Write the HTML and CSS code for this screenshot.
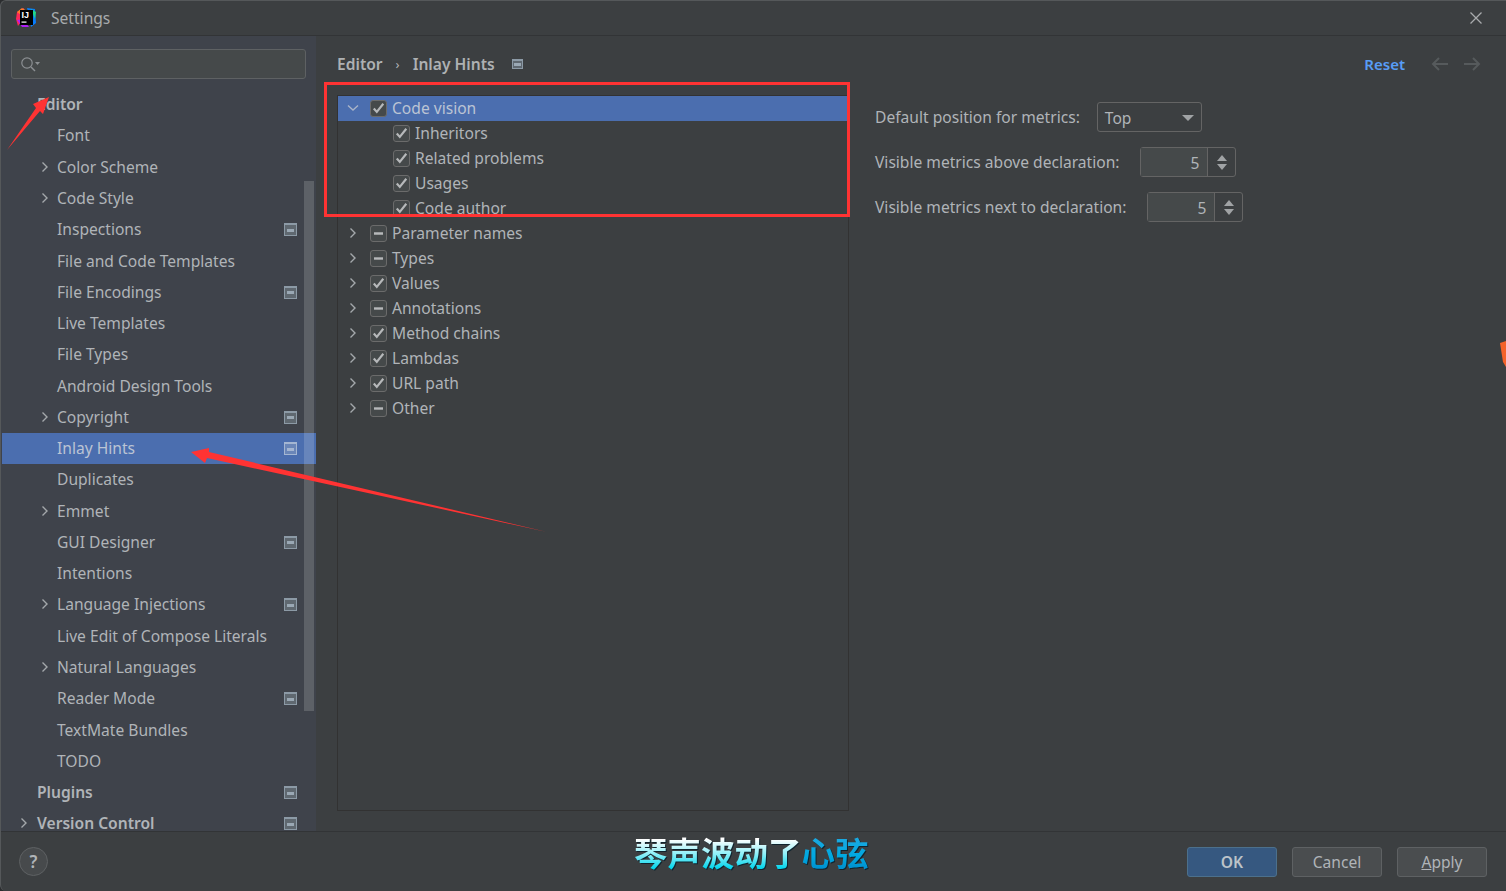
FILE: index.html
```html
<!DOCTYPE html>
<html lang="en">
<head>
    <meta charset="UTF-8">
    <title>Settings</title>
    <link rel="stylesheet" href="styles.css">
</head>
<body>
    <svg class="defs" width="0" height="0">
        <symbol id="chev-right" viewBox="0 0 10 12"><path d="M2.500 1.500L7 6l-4.500 4.500" fill="none" stroke="#a4a8ab" stroke-width="1.400"/></symbol>
        <symbol id="chev-down" viewBox="0 0 12 10"><path d="M1 2.500L6 7l5-4.500" fill="none" stroke="#a9b4c8" stroke-width="1.400"/></symbol>
        <symbol id="check" viewBox="0 0 15 15"><path d="M2.800 7.500l3 3.400L12.300 2.800" fill="none" stroke="#b6b8ba" stroke-width="2.200"/></symbol>
        <symbol id="dash" viewBox="0 0 15 15"><path d="M3 7.500h9" fill="none" stroke="#b6b8ba" stroke-width="2.400"/></symbol>
    </svg>

    <div class="window">
        <div class="titlebar">
            <svg class="logo" width="22" height="22" viewBox="0 0 22 22">
                <polygon points="2,5 9,1 8,12 3,19 1,12" fill="#fe2857"/>
                <polygon points="2,5 7,1 12,4 6,8" fill="#fe7a2b"/>
                <polygon points="12,1 20,2 21,16 16,20 14,8" fill="#087cfa"/>
                <polygon points="16,2 21,5 20,12" fill="#21d789"/>
                <polygon points="2,13 7,20 14,20 8,12" fill="#af1df5"/>
                <rect x="5" y="3" width="13" height="15" fill="#000"/>
                <text x="6.500" y="11" class="logo-text">IJ</text>
                <rect x="6.500" y="14.500" width="5" height="1.200" fill="#fff"/>
            </svg>
            <span class="title">Settings</span>
            <svg class="close" width="14" height="14" viewBox="0 0 14 14"><path d="M1.500 1.500l11 11M12.500 1.500l-11 11" stroke="#a9abad" stroke-width="1.300"/></svg>
        </div>

        <div class="content">
            <div class="sidebar">
                <div class="search">
                    <svg width="22" height="16" viewBox="0 0 22 16"><circle cx="7" cy="7" r="5.200" fill="none" stroke="#8c9093" stroke-width="1.200"/><path d="M11 11l4 4" stroke="#8c9093" stroke-width="1.400"/><path d="M15 6h5l-2.500 3z" fill="#8c9093"/></svg>
                </div>
                <ul class="tree">
                    <li class="top">Editor</li>
                    <li>Font</li>
                    <li class="arrow"><svg class="chev"><use href="#chev-right"/></svg>Color Scheme</li>
                    <li class="arrow"><svg class="chev"><use href="#chev-right"/></svg>Code Style</li>
                    <li class="scoped">Inspections</li>
                    <li>File and Code Templates</li>
                    <li class="scoped">File Encodings</li>
                    <li>Live Templates</li>
                    <li>File Types</li>
                    <li>Android Design Tools</li>
                    <li class="arrow scoped"><svg class="chev"><use href="#chev-right"/></svg>Copyright</li>
                    <li class="scoped selected">Inlay Hints</li>
                    <li>Duplicates</li>
                    <li class="arrow"><svg class="chev"><use href="#chev-right"/></svg>Emmet</li>
                    <li class="scoped">GUI Designer</li>
                    <li>Intentions</li>
                    <li class="arrow scoped"><svg class="chev"><use href="#chev-right"/></svg>Language Injections</li>
                    <li>Live Edit of Compose Literals</li>
                    <li class="arrow"><svg class="chev"><use href="#chev-right"/></svg>Natural Languages</li>
                    <li class="scoped">Reader Mode</li>
                    <li>TextMate Bundles</li>
                    <li>TODO</li>
                    <li class="top scoped">Plugins</li>
                    <li class="top arrow scoped"><svg class="chev"><use href="#chev-right"/></svg>Version Control</li>
                </ul>
                <div class="scrollbar"></div>
            </div>

            <div class="main">
                <div class="breadcrumbs">
                    <span class="crumb">Editor</span>
                    <span class="crumb-sep">›</span>
                    <span class="crumb">Inlay Hints</span>
                    <span class="scope-icon"></span>
                    <a class="reset">Reset</a>
                    <svg class="nav-arrow" width="18" height="14" viewBox="0 0 18 14"><path d="M17 7H2M8 1L2 7l6 6" fill="none" stroke="#565a5c" stroke-width="2"/></svg>
                    <svg class="nav-arrow" width="18" height="14" viewBox="0 0 18 14"><path d="M1 7h15M10 1l6 6-6 6" fill="none" stroke="#565a5c" stroke-width="2"/></svg>
                </div>

                <div class="panels">
                    <div class="hints">
                        <div class="hint active"><svg class="hint-chev"><use href="#chev-down"/></svg><span class="box"><svg><use href="#check"/></svg></span>Code vision</div>
                        <div class="hint child"><span class="box"><svg><use href="#check"/></svg></span>Inheritors</div>
                        <div class="hint child"><span class="box"><svg><use href="#check"/></svg></span>Related problems</div>
                        <div class="hint child"><span class="box"><svg><use href="#check"/></svg></span>Usages</div>
                        <div class="hint child"><span class="box"><svg><use href="#check"/></svg></span>Code author</div>
                        <div class="hint"><svg class="hint-chev"><use href="#chev-right"/></svg><span class="box"><svg><use href="#dash"/></svg></span>Parameter names</div>
                        <div class="hint"><svg class="hint-chev"><use href="#chev-right"/></svg><span class="box"><svg><use href="#dash"/></svg></span>Types</div>
                        <div class="hint"><svg class="hint-chev"><use href="#chev-right"/></svg><span class="box"><svg><use href="#check"/></svg></span>Values</div>
                        <div class="hint"><svg class="hint-chev"><use href="#chev-right"/></svg><span class="box"><svg><use href="#dash"/></svg></span>Annotations</div>
                        <div class="hint"><svg class="hint-chev"><use href="#chev-right"/></svg><span class="box"><svg><use href="#check"/></svg></span>Method chains</div>
                        <div class="hint"><svg class="hint-chev"><use href="#chev-right"/></svg><span class="box"><svg><use href="#check"/></svg></span>Lambdas</div>
                        <div class="hint"><svg class="hint-chev"><use href="#chev-right"/></svg><span class="box"><svg><use href="#check"/></svg></span>URL path</div>
                        <div class="hint"><svg class="hint-chev"><use href="#chev-right"/></svg><span class="box"><svg><use href="#dash"/></svg></span>Other</div>
                    </div>

                    <div class="options">
                        <div class="option">
                            <span>Default position for metrics:</span>
                            <div class="select">Top<i class="caret"></i></div>
                        </div>
                        <div class="option">
                            <span>Visible metrics above declaration:</span>
                            <div class="spinner"><span class="value">5</span><span class="steps"><i class="up"></i><i class="down"></i></span></div>
                        </div>
                        <div class="option">
                            <span>Visible metrics next to declaration:</span>
                            <div class="spinner"><span class="value">5</span><span class="steps"><i class="up"></i><i class="down"></i></span></div>
                        </div>
                    </div>
                </div>
            </div>
        </div>

        <div class="footer">
            <div class="help">?</div>
            <div class="buttons">
                <button class="btn primary">OK</button>
                <button class="btn">Cancel</button>
                <button class="btn"><u>A</u>pply</button>
            </div>
        </div>
    </div>

    <!-- annotations drawn on top of the screenshot -->
    <div class="redbox"></div>
    <svg class="marks" width="1506" height="891" viewBox="0 0 1506 891">
        <polygon points="49,97 43,114 40,111 7,150 36,108 33,104" fill="#ff3333"/>
        <polygon points="191,452 209,448 209,452 547,532 207,458 205,463" fill="#ff3333"/>
        <polygon points="1500,343 1506,341 1506,367 1503,362" fill="#f4622a"/>
    </svg>
    <div class="subtitle"><span class="sub-a">琴声波动了</span><span class="sub-b">心弦</span></div>
</body>
</html>
```

FILE: styles.css
```css
* {
    box-sizing: border-box;
}

html, body {
    margin: 0;
    height: 100%;
    background-color: #2b2d2f;
    overflow: hidden;
}

body {
    position: relative;
    font-family: "Noto Sans", "Open Sans", sans-serif;
    font-size: 15.600px;
    color: #b0b4b8;
}

.defs {
    position: absolute;
}

.window {
    display: flex;
    flex-direction: column;
    width: 1506px;
    height: 891px;
    background-color: #3c3f41;
    border-left: 1px solid #55585a;
    border-top: 1px solid #55585a;
    border-radius: 6px 0 0 6px;
    overflow: hidden;
}

/* Title bar */
.titlebar {
    display: flex;
    align-items: center;
    flex: none;
    height: 35px;
    padding-left: 14px;
    padding-right: 23px;
    border-bottom: 1px solid #323436;
}

.logo-text {
    font-family: "Liberation Sans", sans-serif;
    font-size: 9px;
    font-weight: bold;
    fill: #fff;
}

.title {
    margin-left: 14px;
    color: #a8abad;
}

.close {
    margin-left: auto;
}

/* Main area */
.content {
    display: flex;
    flex: 1;
    min-height: 0;
}

.sidebar {
    position: relative;
    flex: none;
    width: 315px;
    background-color: #3f434b;
    overflow: hidden;
}

.search {
    display: flex;
    align-items: center;
    height: 30px;
    margin: 13px 10px 0 10px;
    padding-left: 8px;
    background-color: #45494a;
    border: 1px solid #5e6163;
    border-radius: 3px;
}

.tree {
    list-style: none;
    margin: 10.200px 0 0 0;
    padding: 0;
}

.tree li {
    position: relative;
    height: 31.280px;
    line-height: 31.280px;
    padding-left: 56px;
    white-space: nowrap;
}

.tree li.top {
    padding-left: 36px;
    font-weight: 600;
}

.tree li.selected {
    background-color: #4b6eaf;
    color: #bbc4d4;
    margin-left: 1px;
    padding-left: 55px;
}

.chev {
    position: absolute;
    left: 39px;
    top: 9px;
    width: 10px;
    height: 12px;
}

.top .chev {
    left: 18px;
}

.scoped::after,
.scope-icon {
    content: "";
    display: block;
    width: 11px;
    height: 10px;
    border: 1px solid #8c9aa6;
    border-top-width: 2px;
    background: linear-gradient(#9aa8b4, #9aa8b4) center / 7px 3px no-repeat, #5f6870;
}

.scoped::after {
    position: absolute;
    left: 283px;
    top: 9px;
}

.selected.scoped::after {
    left: 282px;
    background: linear-gradient(#a4b6d2, #a4b6d2) center / 7px 3px no-repeat, #6a86b8;
    border-color: #a4b6d2;
}

.scrollbar {
    position: absolute;
    left: 303px;
    top: 145px;
    width: 10px;
    height: 530px;
    background-color: rgba(255, 255, 255, 0.16);
}

.main {
    flex: 1;
    min-width: 0;
    padding: 0 20px 0 21px;
}

.breadcrumbs {
    display: flex;
    align-items: center;
    height: 59px;
    padding-bottom: 3px;
    padding-right: 5px;
}

.crumb {
    font-weight: 600;
    color: #aeb1b3;
}

.crumb-sep {
    margin: 0 13px;
    font-size: 13px;
}

.scope-icon {
    margin-left: 17px;
}

.reset {
    margin-left: auto;
    margin-right: 26px;
    font-size: 15px;
    font-weight: 600;
    color: #589df6;
}

.nav-arrow {
    margin-left: 14px;
}

.nav-arrow:first-of-type {
    margin-left: 0;
}

.panels {
    display: flex;
}

.hints {
    flex: none;
    width: 512px;
    height: 716px;
    border: 1px solid #323232;
}

.hint {
    display: flex;
    align-items: center;
    position: relative;
    height: 25px;
    padding-left: 32px;
    padding-bottom: 2px;
    white-space: nowrap;
}

.hint.active {
    background-color: #4b6eaf;
    color: #bbc4d4;
}

.hint.child {
    padding-left: 55px;
}

.hint-chev {
    position: absolute;
    left: 9px;
    top: 6px;
    width: 12px;
    height: 12px;
}

.box {
    position: relative;
    top: 1px;
    flex: none;
    width: 17px;
    height: 17px;
    margin-right: 5px;
    background-color: #45494a;
    border: 1px solid #6b6b6b;
    border-radius: 3px;
}

.box svg {
    display: block;
    width: 15px;
    height: 15px;
}

.options {
    padding: 7px 0 0 26px;
}

.option {
    display: flex;
    align-items: center;
    height: 30px;
    margin-bottom: 15px;
}

.select {
    position: relative;
    width: 105px;
    height: 30px;
    margin-left: 17px;
    line-height: 30px;
    padding-left: 7px;
    border: 1px solid #646464;
    border-radius: 3px;
}

.caret {
    position: absolute;
    right: 7px;
    top: 12px;
    border-left: 6px solid transparent;
    border-right: 6px solid transparent;
    border-top: 6px solid #a0a3a5;
}

.spinner {
    display: flex;
    width: 96px;
    height: 30px;
    margin-left: 21px;
    border: 1px solid #646464;
    border-radius: 3px;
}

.value {
    flex: 1;
    line-height: 30px;
    padding-right: 8px;
    text-align: right;
    background-color: #45494a;
    border-right: 1px solid #646464;
}

.steps {
    display: flex;
    flex-direction: column;
    align-items: center;
    justify-content: center;
    gap: 3px;
    width: 27px;
}

.up {
    border-left: 5px solid transparent;
    border-right: 5px solid transparent;
    border-bottom: 6px solid #a0a3a5;
}

.down {
    border-left: 5px solid transparent;
    border-right: 5px solid transparent;
    border-top: 6px solid #a0a3a5;
}

/* Footer */
.footer {
    display: flex;
    align-items: center;
    justify-content: space-between;
    flex: none;
    height: 60px;
    padding: 0 19px 0 18px;
    border-top: 1px solid #323436;
}

.help {
    width: 29px;
    height: 29px;
    line-height: 27px;
    text-align: center;
    font-weight: 600;
    font-size: 17px;
    background-color: #474a4c;
    border: 1px solid #5e6163;
    border-radius: 50%;
}

.buttons {
    display: flex;
    gap: 15px;
}

.btn {
    width: 90px;
    height: 30px;
    padding: 0;
    font-family: inherit;
    font-size: 15.600px;
    color: #b0b4b8;
    background-color: #4a4d4f;
    border: 1px solid #5e6163;
    border-radius: 3px;
}

.btn.primary {
    font-weight: 600;
    color: #bcc3c9;
    background-color: #365880;
    border-color: #4c708c;
}

/* Overlays */
.redbox {
    position: absolute;
    left: 324px;
    top: 82px;
    width: 526px;
    height: 135px;
    border: 3px solid #ff3333;
}

.marks {
    position: absolute;
    left: 0;
    top: 0;
}

.subtitle {
    position: absolute;
    left: 634px;
    top: 829px;
    font-family: "Noto Sans CJK SC", sans-serif;
    font-size: 33.500px;
    font-weight: 700;
    line-height: 46px;
    white-space: nowrap;
    filter: drop-shadow(1px 1px 0 #10242e);
}

.sub-a {
    background: linear-gradient(#ffffff 25%, #8ff0f8 55%, #00d4ec 85%);
    -webkit-background-clip: text;
    background-clip: text;
    color: transparent;
}

.sub-b {
    background: linear-gradient(#1aa8e0 25%, #00a8e0 60%, #0090d0 85%);
    -webkit-background-clip: text;
    background-clip: text;
    color: transparent;
}
```
